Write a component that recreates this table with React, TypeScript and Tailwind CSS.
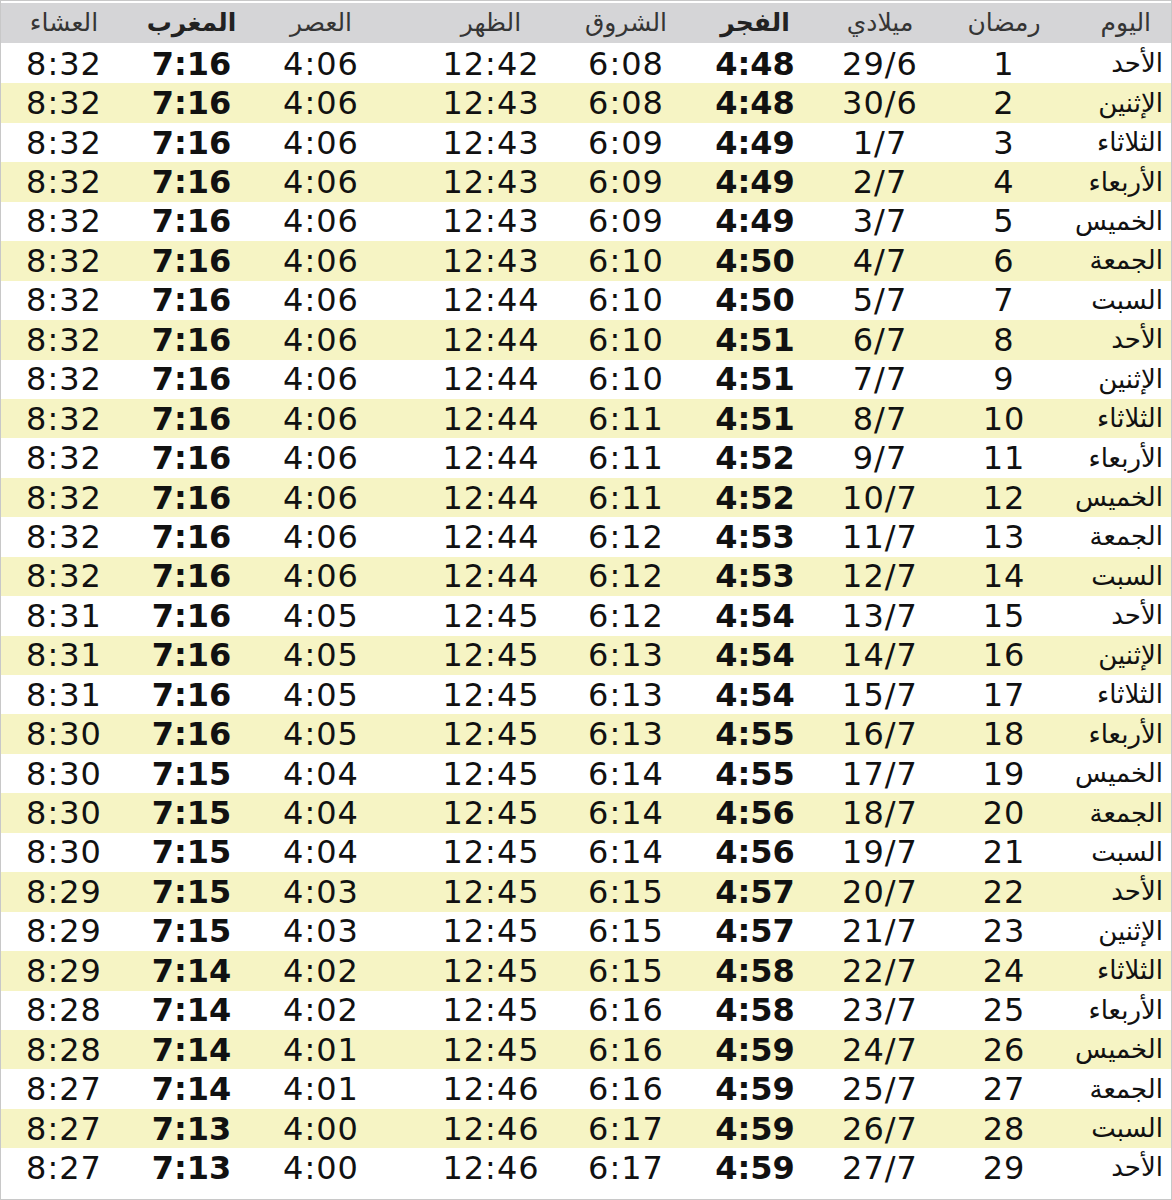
import React from "react";

type Row = [string, string, string, string, string, string, string, string, string];

// day, ramadan, miladi, fajr, shuruq, dhuhr, asr, maghrib, isha
const rows: Row[] = [
	["الأحد", "1", "29/6", "4:48", "6:08", "12:42", "4:06", "7:16", "8:32"],
	["الإثنين", "2", "30/6", "4:48", "6:08", "12:43", "4:06", "7:16", "8:32"],
	["الثلاثاء", "3", "1/7", "4:49", "6:09", "12:43", "4:06", "7:16", "8:32"],
	["الأربعاء", "4", "2/7", "4:49", "6:09", "12:43", "4:06", "7:16", "8:32"],
	["الخميس", "5", "3/7", "4:49", "6:09", "12:43", "4:06", "7:16", "8:32"],
	["الجمعة", "6", "4/7", "4:50", "6:10", "12:43", "4:06", "7:16", "8:32"],
	["السبت", "7", "5/7", "4:50", "6:10", "12:44", "4:06", "7:16", "8:32"],
	["الأحد", "8", "6/7", "4:51", "6:10", "12:44", "4:06", "7:16", "8:32"],
	["الإثنين", "9", "7/7", "4:51", "6:10", "12:44", "4:06", "7:16", "8:32"],
	["الثلاثاء", "10", "8/7", "4:51", "6:11", "12:44", "4:06", "7:16", "8:32"],
	["الأربعاء", "11", "9/7", "4:52", "6:11", "12:44", "4:06", "7:16", "8:32"],
	["الخميس", "12", "10/7", "4:52", "6:11", "12:44", "4:06", "7:16", "8:32"],
	["الجمعة", "13", "11/7", "4:53", "6:12", "12:44", "4:06", "7:16", "8:32"],
	["السبت", "14", "12/7", "4:53", "6:12", "12:44", "4:06", "7:16", "8:32"],
	["الأحد", "15", "13/7", "4:54", "6:12", "12:45", "4:05", "7:16", "8:31"],
	["الإثنين", "16", "14/7", "4:54", "6:13", "12:45", "4:05", "7:16", "8:31"],
	["الثلاثاء", "17", "15/7", "4:54", "6:13", "12:45", "4:05", "7:16", "8:31"],
	["الأربعاء", "18", "16/7", "4:55", "6:13", "12:45", "4:05", "7:16", "8:30"],
	["الخميس", "19", "17/7", "4:55", "6:14", "12:45", "4:04", "7:15", "8:30"],
	["الجمعة", "20", "18/7", "4:56", "6:14", "12:45", "4:04", "7:15", "8:30"],
	["السبت", "21", "19/7", "4:56", "6:14", "12:45", "4:04", "7:15", "8:30"],
	["الأحد", "22", "20/7", "4:57", "6:15", "12:45", "4:03", "7:15", "8:29"],
	["الإثنين", "23", "21/7", "4:57", "6:15", "12:45", "4:03", "7:15", "8:29"],
	["الثلاثاء", "24", "22/7", "4:58", "6:15", "12:45", "4:02", "7:14", "8:29"],
	["الأربعاء", "25", "23/7", "4:58", "6:16", "12:45", "4:02", "7:14", "8:28"],
	["الخميس", "26", "24/7", "4:59", "6:16", "12:45", "4:01", "7:14", "8:28"],
	["الجمعة", "27", "25/7", "4:59", "6:16", "12:46", "4:01", "7:14", "8:27"],
	["السبت", "28", "26/7", "4:59", "6:17", "12:46", "4:00", "7:13", "8:27"],
	["الأحد", "29", "27/7", "4:59", "6:17", "12:46", "4:00", "7:13", "8:27"],
];

const headers = ["اليوم", "رمضان", "ميلادي", "الفجر", "الشروق", "الظهر", "العصر", "المغرب", "العشاء"];
const boldCols = [3, 7];

// extra padding so each column's text sits where the original has it
const cellPad = ["", "", "", "", "", "pl-[16px]", "pr-[20px]", "", ""];

const gridCols =
	"grid grid-cols-[105px_124px_124px_126px_132px_154px_150px_129px_126px]";

const App = () => {
	return (
		<div className="w-[1172px] h-[1200px] bg-white">
			<div
				dir="rtl"
				className="w-[1172px] h-[1200px] border border-[#c8c8c8] pt-[2px] font-['DejaVu_Sans',sans-serif] text-[#111]"
			>
				<div className={`${gridCols} h-[40px] bg-[#d5d5d7] text-[#353535] text-[25px] items-center`}>
					{headers.map((h, i) => (
						<div
							key={h}
							className={
								i === 0
									? "text-right pr-[20px]"
									: "text-center " + cellPad[i] + (boldCols.includes(i) ? " font-bold text-[#222]" : "")
							}
						>
							{h}
						</div>
					))}
				</div>
				<div className="pt-[1px]">
					{rows.map((row, r) => (
						<div
							key={r}
							className={`${gridCols} h-[39.45px] items-center ${r % 2 === 1 ? "bg-[#f6f4c4]" : "bg-white"}`}
						>
							{row.map((cell, i) => (
								<div
									key={i}
									className={
										i === 0
											? "text-right pr-[8px] text-[26px]"
											: "text-center text-[32px] leading-none " +
											  cellPad[i] +
											  (boldCols.includes(i) ? " font-bold" : " tracking-[1px]")
									}
								>
									{cell}
								</div>
							))}
						</div>
					))}
				</div>
			</div>
		</div>
	);
};

export default App;
